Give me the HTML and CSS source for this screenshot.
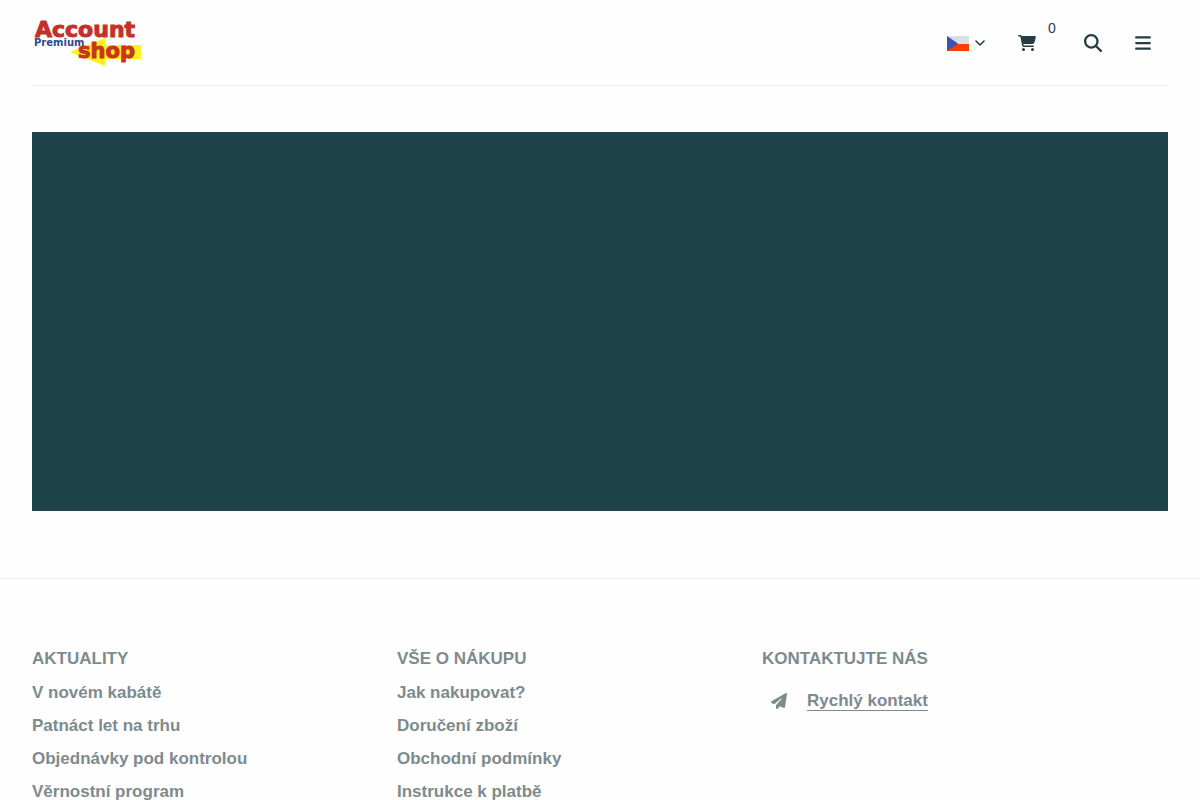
FILE: index.html
```
<!DOCTYPE html>
<html lang="cs">
<head>
    <meta charset="UTF-8">
    <meta name="viewport" content="width=device-width, initial-scale=1.0">
    <title>Account Premium shop</title>
    <link rel="stylesheet" href="styles.css">
</head>
<body>
    <header class="header">
        <a href="#" class="logo" aria-label="Account Premium shop">
            <svg width="112" height="54" viewBox="0 0 112 54">
                <path d="M38 36L73 22V29H109V43H73V50Z" fill="#fff21a"/>
                <text class="logo-account" x="3" y="21">Account</text>
                <text class="logo-premium" x="2" y="30">Premium</text>
                <text class="logo-shop" x="46" y="42">shop</text>
            </svg>
        </a>
        <nav class="tools">
            <button class="tool lang" type="button" aria-label="Jazyk">
                <svg width="22" height="15" viewBox="0 0 22 15">
                    <path d="M0 0H22V8H0Z" fill="#d9e0e3"/>
                    <path d="M0 8H22V15H0Z" fill="#ff3d00"/>
                    <path d="M0 0L11 7.5L0 15Z" fill="#3f51b5"/>
                </svg>
                <svg width="10" height="6" viewBox="0 0 10 6">
                    <path d="M1 1L5 5L9 1" fill="none" stroke="currentColor" stroke-width="1.6" stroke-linecap="round" stroke-linejoin="round"/>
                </svg>
            </button>
            <a href="#" class="tool cart" aria-label="Košík">
                <svg width="18" height="16" viewBox="0 0 576 512" fill="currentColor">
                    <path d="M0 24C0 10.7 10.7 0 24 0H69.500c22 0 41.500 12.800 50.600 32h411c26.300 0 45.500 25 38.600 50.400l-41 152.300c-8.500 31.400-37 53.300-69.500 53.300H170.700l5.400 28.500c2.200 11.300 12.100 19.500 23.600 19.500H488c13.300 0 24 10.700 24 24s-10.700 24-24 24H199.700c-34.600 0-64.300-24.600-70.700-58.500L77.400 54.500c-.7-3.800-4-6.500-7.900-6.500H24C10.700 48 0 37.300 0 24zM128 464a48 48 0 1 1 96 0 48 48 0 1 1-96 0zm336-48a48 48 0 1 1 0 96 48 48 0 1 1 0-96z"/>
                </svg>
                <span class="cart-count">0</span>
            </a>
            <button class="tool search" type="button" aria-label="Hledat">
                <svg width="18" height="18" viewBox="0 0 512 512" fill="currentColor">
                    <path d="M416 208c0 45.900-14.900 88.300-40 122.700L502.600 457.400c12.500 12.500 12.500 32.800 0 45.300s-32.800 12.500-45.300 0L330.700 376c-34.400 25.200-76.800 40-122.700 40C93.100 416 0 322.900 0 208S93.100 0 208 0S416 93.100 416 208zM208 352a144 144 0 1 0 0-288 144 144 0 1 0 0 288z"/>
                </svg>
            </button>
            <button class="tool menu" type="button" aria-label="Menu">
                <svg width="16" height="18" viewBox="0 0 448 512" fill="currentColor">
                    <path d="M0 96C0 78.300 14.300 64 32 64H416c17.700 0 32 14.300 32 32s-14.300 32-32 32H32C14.300 128 0 113.700 0 96zM0 256c0-17.700 14.300-32 32-32H416c17.700 0 32 14.300 32 32s-14.300 32-32 32H32c-17.700 0-32-14.300-32-32zM448 416c0 17.700-14.300 32-32 32H32c-17.700 0-32-14.300-32-32s14.300-32 32-32H416c17.700 0 32 14.300 32 32z"/>
                </svg>
            </button>
        </nav>
    </header>

    <main class="main">
        <div class="banner"></div>
    </main>

    <footer class="footer">
        <section>
            <h2>AKTUALITY</h2>
            <ul class="links">
                <li><a href="#">V novém kabátě</a></li>
                <li><a href="#">Patnáct let na trhu</a></li>
                <li><a href="#">Objednávky pod kontrolou</a></li>
                <li><a href="#">Věrnostní program</a></li>
            </ul>
        </section>
        <section>
            <h2>VŠE O NÁKUPU</h2>
            <ul class="links">
                <li><a href="#">Jak nakupovat?</a></li>
                <li><a href="#">Doručení zboží</a></li>
                <li><a href="#">Obchodní podmínky</a></li>
                <li><a href="#">Instrukce k platbě</a></li>
            </ul>
        </section>
        <section>
            <h2>KONTAKTUJTE NÁS</h2>
            <p class="contact">
                <svg width="16" height="16" viewBox="0 0 512 512" fill="currentColor">
                    <path d="M498.100 5.600c10.100 7 15.400 19.100 13.500 31.200l-64 416c-1.500 9.700-7.400 18.200-16 23s-18.900 5.400-28 1.600L284 427.700l-68.500 74.100c-8.900 9.700-22.900 12.900-35.200 8.100S160 493.200 160 480V396.400c0-4 1.500-7.800 4.200-10.700L331.800 202.800c5.800-6.300 5.600-16-.4-22s-15.700-6.400-22-.7L106 360.800 17.700 316.600C7.100 311.300 .3 300.700 0 288.900s5.900-22.800 16.100-28.700l448-256c10.700-6.100 23.900-5.500 34 1.400z"/>
                </svg>
                <a href="#">Rychlý kontakt</a>
            </p>
        </section>
    </footer>
</body>
</html>
```
FILE: styles.css
```
* {
    box-sizing: border-box;
}
html {
    overflow-x: hidden;
    scrollbar-width: none;
}
body {
    margin: 0;
    background: #fefefe;
    color: #263c43;
    font-family: "Liberation Sans", Arial, sans-serif;
    font-size: 16px;
}
a {
    color: inherit;
    text-decoration: none;
}
svg {
    display: block;
}
.header {
    display: flex;
    justify-content: space-between;
    align-items: center;
    margin: 0 32px;
    padding: 16px 17px 15px 0;
    border-bottom: 1px solid #ebeded;
}
.logo text {
    font-family: "DejaVu Sans", sans-serif;
    font-weight: bold;
}
.logo-account {
    font-size: 22px;
    fill: #c4302b;
    stroke: #c4302b;
}
.logo-premium {
    font-size: 10px;
    fill: #2f4a8a;
}
.logo-shop {
    font-size: 21px;
    fill: #c8341c;
    stroke: #c8341c;
}
.tools {
    display: flex;
    align-items: center;
    gap: 33px;
}
.tool {
    display: flex;
    align-items: center;
    padding: 0;
    border: none;
    background: none;
    color: inherit;
    cursor: pointer;
}
.lang {
    gap: 6px;
}
.cart {
    position: relative;
    margin-right: 15px;
}
.cart-count {
    position: absolute;
    left: 30px;
    top: -15px;
    font-size: 14px;
    line-height: 16px;
}
.main {
    padding: 46px 32px 67px;
}
.banner {
    aspect-ratio: 3 / 1;
    background: #1f434b;
}
.footer {
    display: grid;
    grid-template-columns: repeat(3, 1fr);
    padding: 70px 73px 40px 32px;
    border-top: 1px solid #ebeded;
    color: #7d8b8e;
    font-size: 17px;
    font-weight: bold;
}
.footer h2 {
    margin: 0 0 7px;
    font-size: 17px;
    line-height: 20px;
}
.links {
    margin: 0;
    padding: 0;
    list-style: none;
    line-height: 33px;
}
.contact {
    display: flex;
    align-items: center;
    gap: 20px;
    margin: 23px 0 0;
    padding-left: 9px;
    line-height: 18px;
}
.contact a {
    border-bottom: 1px solid;
}
```
